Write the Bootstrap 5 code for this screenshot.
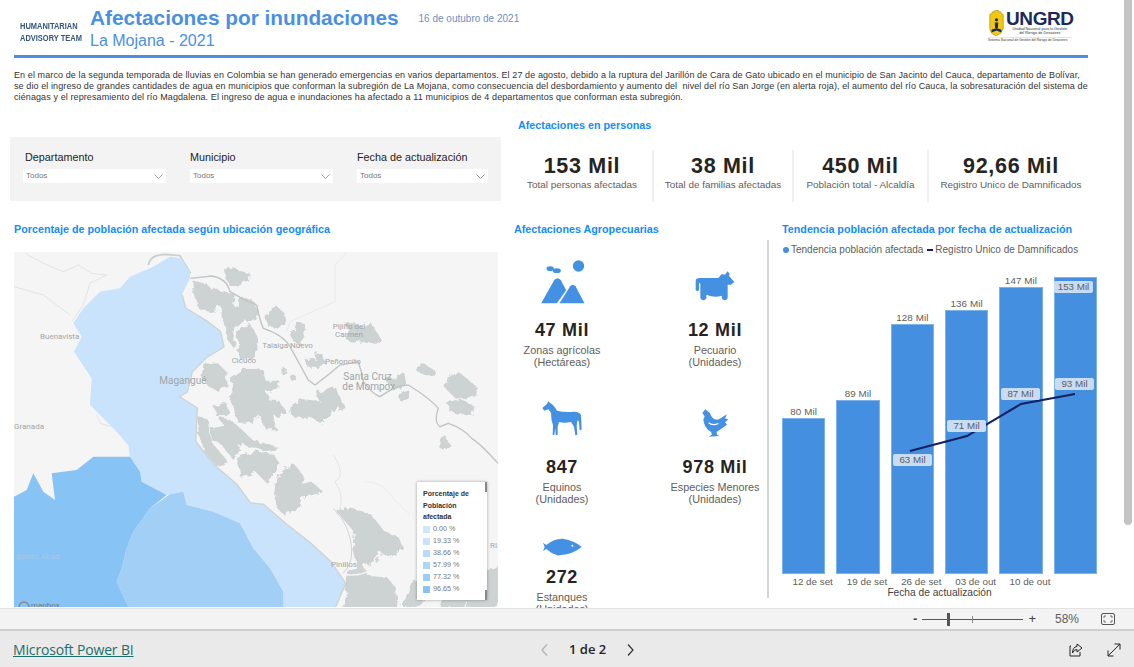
<!DOCTYPE html>
<html lang="es">
<head>
    <meta charset="utf-8">
    <title>Afectaciones por inundaciones</title>
    <link href="https://cdn.jsdelivr.net/npm/bootstrap@5.3.0/dist/css/bootstrap.min.css" rel="stylesheet">
    <style>
        body { font-family: "Liberation Sans", Arial, sans-serif; background: #fff; overflow: hidden; }
        .app { height: 667px; }
        .report { height: 608px; position: relative; overflow: hidden; padding-left: 10px; }
        .scroll-thumb { position: absolute; right: 2px; top: 0; width: 8px; height: 525px; background: #c4c4c4; border-radius: 0 0 4px 4px; }
        .head-row { height: 55px; padding-left: 10px; padding-right: 62px; }
        .team { width: 70px; padding-top: 20px; font-size: 8.5px; font-weight: 700; line-height: 12px; color: #34557c; transform: scaleX(.88); transform-origin: left; white-space: nowrap; }
        .main-title { font-size: 20.8px; font-weight: 700; color: #4a90e2; line-height: 24px; padding-top: 6px; }
        .sub-title { font-size: 16px; color: #4a90e2; line-height: 19px; margin-top: 1px; }
        .report-date { font-size: 10px; color: #6f8fc0; padding-top: 11px; margin-left: 20px; }
        .logo { width: 84px; padding-top: 10px; }
        .logo-name { font-size: 19px; font-weight: 700; line-height: 17px; color: #1b2a5c; letter-spacing: -.4px; }
        .logo-sub { font-size: 3.8px; line-height: 4.2px; color: #333; text-align: center; }
        .logo-foot { font-size: 3.3px; line-height: 4px; color: #333; border-top: 1px solid #f6e9a0; margin-top: 1px; white-space: nowrap; }
        .shield { margin-right: 1px; }
        .rule { height: 3px; background: #4a90e2; margin: 0 46px 0 4px; }
        .intro { font-size: 9px; line-height: 11px; color: #333; margin: 12px 0 0 4px; white-space: nowrap; letter-spacing: .1px; }
        .top-grid { display: grid; grid-template-columns: 491px 1fr; margin-top: 15px; }
        .filters-wrap { padding-top: 7px; }
        .blue-head { font-size: 10.75px; font-weight: 700; color: #118dff; line-height: 14px; white-space: nowrap; }
        .filters { margin-top: 12px; background: #f3f3f3; height: 64px; display: grid; grid-template-columns: 143px 143px 1fr; column-gap: 24px; padding: 13px 13px 0 13px; }
        .slicer-name { font-size: 10.8px; line-height: 15px; color: #252423; white-space: nowrap; }
        .filters > div:first-child .slicer-name { margin-left: 2px; }
        .slicer-box { height: 14px; margin-top: 4px; background: #fff; font-size: 8px; line-height: 14px; color: #777; padding: 0 3px; }
        .people { padding-left: 17px; padding-right: 31px; }
        .kpi-row { display: grid; grid-template-columns: 134px 140px 135px 166px; margin-top: 18px; }
        .kpi { text-align: center; height: 52px; border-left: 2px solid #efefef; padding-top: 5px; }
        .kpi:first-child { border-left: 0; padding-right: 6px; }
        .kpi-num { font-size: 21.5px; font-weight: 700; line-height: 22px; color: #252423; letter-spacing: .7px; }
        .kpi-text { font-size: 9.9px; line-height: 14px; color: #605e5c; margin-top: 1px; white-space: nowrap; }
        .low-grid { display: grid; grid-template-columns: 504px 255px 1fr; margin-top: 20px; }
        .map-col { padding-left: 4px; }
        .map-box { margin-top: 16px; width: 484px; height: 355px; position: relative; background: #f5f5f5; overflow: hidden; }
        .map-box svg { display: block; }
        .map-name { font-family: Roboto, "Liberation Sans", sans-serif; fill: #a2a6a6; font-size: 24px; }
        .map-name.big { font-size: 30px; }
        .legend-box { position: absolute; left: 403px; top: 230px; width: 70px; height: 118px; background: #fff; box-shadow: 0 0 3px rgba(0,0,0,.35); padding: 6px 6px; }
        .legend-head { font-size: 7px; font-weight: 700; line-height: 11.7px; color: #333; }
        .legend-line { font-size: 7.2px; line-height: 12px; color: #777; display: flex; align-items: center; gap: 3px; }
        .legend-swatch { width: 7px; height: 7px; display: inline-block; }
        .legend-thumb { position: absolute; right: 0; width: 2px; height: 10px; background: #888; }
        .agro-body { margin-top: 4px; margin-left: -27px; height: 358px; border-right: 2px solid #d4d4d4; display: grid; grid-template-columns: 153px 1fr; grid-template-rows: 137px 122px auto; padding-top: 12px; }
        .agro-item { text-align: center; width: 150px; }
        .ico-box { height: 67px; display: flex; align-items: center; justify-content: center; }
        .ico-box.short { height: 55px; }
        .agro-num { font-size: 18px; font-weight: 700; line-height: 22px; color: #252423; letter-spacing: .7px; }
        .agro-text { font-size: 10.8px; line-height: 12px; color: #605e5c; margin-top: 3px; }
        .chart-col { padding-left: 13px; }
        .legend-row { font-size: 10px; line-height: 14px; color: #605e5c; margin-top: 7px; white-space: nowrap; }
        .dot-mark { width: 6px; height: 6px; border-radius: 50%; background: #448fdf; margin: 0 2px 0 1px; }
        .dash-mark { width: 6px; height: 2px; background: #14205f; margin: 0 2px 0 4px; }
        .plot { position: relative; width: 315px; height: 306px; margin-top: 11px; }
        .bars { height: 100%; gap: 11px; }
        .bar-slot { flex: 1; display: flex; flex-direction: column; justify-content: flex-end; text-align: center; }
        .bar-value { font-size: 9.8px; line-height: 13px; color: #605e5c; letter-spacing: .1px; }
        .bar-fill { background: #448fdf; border: 1px solid #7db2ea; }
        .trend { position: absolute; left: 0; top: 0; }
        .chip { position: absolute; width: 39px; height: 12px; background: #c8dcf4; border-radius: 2px; font-size: 9.8px; line-height: 12px; text-align: center; color: #605e5c; }
        .axis-row { gap: 11px; width: 315px; margin-left: 9px; font-size: 9.8px; line-height: 12px; color: #605e5c; margin-top: 2px; }
        .axis-cell { flex: 1; text-align: center; white-space: nowrap; }
        .axis-title { width: 315px; text-align: center; font-size: 10.2px; line-height: 11px; color: #444; margin-top: -1px; }
        .zoom-bar { height: 23px; background: #f3f3f3; border-top: 1px solid #e3e3e3; border-bottom: 2px solid #cfcfcf; padding-right: 19px; color: #555; }
        .zoom-track { width: 101px; height: 1px; background: #555; position: relative; margin: 0 5px; }
        .zoom-knob { position: absolute; left: 25px; top: -6px; width: 3px; height: 13px; background: #555; }
        .zoom-tick { position: absolute; left: 50px; top: -3px; width: 1px; height: 7px; background: #888; }
        .zoom-sign { font-size: 13px; line-height: 14px; color: #444; }
        .zoom-pct { font-size: 12px; margin: 0 22px 0 19px; color: #605e5c; }
        .foot-bar { height: 36px; background: #eaeaea; padding: 2px 13px 0; }
        .brand-wrap { width: 528px; }
        .brand { font-family: "Open Sans", "Liberation Sans", sans-serif; font-size: 14px; color: #1d6f69; letter-spacing: -.15px; }
        .pager { font-size: 13px; font-weight: 600; color: #252423; font-family: "Open Sans", "Liberation Sans", sans-serif; gap: 21px; }
    </style>
</head>
<body>
<div class="app d-flex flex-column">
    <div class="report">
        <div class="head-row d-flex">
            <div class="team">HUMANITARIAN<br>ADVISORY TEAM</div>
            <div>
                <div class="d-flex">
                    <div class="main-title">Afectaciones por inundaciones</div>
                    <div class="report-date">16 de outubro de 2021</div>
                </div>
                <div class="sub-title">La Mojana - 2021</div>
            </div>
            <div class="logo ms-auto">
                <div class="d-flex">
                    <svg class="shield flex-shrink-0" width="17" height="26" viewBox="0 0 17 29">
                        <path d="M1 12 L1 5 L3 4 L4 2 L6 2 L7 0 L10 0 L11 2 L13 2 L14 4 L16 5 L16 21 L13 26 L8 29 L3 26 L1 21 Z" fill="#f2c811" stroke="#8a7a10" stroke-width=".6"/>
                        <circle cx="8.5" cy="11" r="1.8" fill="#1b2a5c"/>
                        <path d="M6.5 14 H10.5 L10 20 H7 Z M3 22 L8.5 20 L14 22 L14 25 L8.5 23 L3 25 Z" fill="#1b2a5c"/>
                    </svg>
                    <div class="flex-grow-1">
                        <div class="logo-name">UNGRD</div>
                        <div class="logo-sub">Unidad Nacional para la Gestión<br>del Riesgo de Desastres</div>
                    </div>
                </div>
                <div class="logo-foot">Sistema Nacional de Gestión del Riesgo de Desastres</div>
            </div>
        </div>
        <div class="rule"></div>
        <div class="intro">En el marco de la segunda temporada de lluvias en Colombia se han generado emergencias en varios departamentos. El 27 de agosto, debido a la ruptura del Jarillón de Cara de Gato ubicado en el municipio de San Jacinto del Cauca, departamento de Bolívar,<br>se dio el ingreso de grandes cantidades de agua en municipios que conforman la subregión de La Mojana, como consecuencia del desbordamiento y aumento del&nbsp; nivel del río San Jorge (en alerta roja), el aumento del río Cauca, la sobresaturación del sistema de<br>ciénagas y el represamiento del río Magdalena. El ingreso de agua e inundaciones ha afectado a 11 municipios de 4 departamentos que conforman esta subregión.</div>

        <div class="top-grid">
            <div class="filters-wrap">
                <div class="filters">
                    <div>
                        <div class="slicer-name">Departamento</div>
                        <div class="slicer-box d-flex justify-content-between align-items-center">Todos
                            <svg width="9" height="5" viewBox="0 0 9 5"><path d="M.5 .5 L4.5 4.5 L8.5 .5" fill="none" stroke="#888" stroke-width=".8"/></svg></div>
                    </div>
                    <div>
                        <div class="slicer-name">Municipio</div>
                        <div class="slicer-box d-flex justify-content-between align-items-center">Todos
                            <svg width="9" height="5" viewBox="0 0 9 5"><path d="M.5 .5 L4.5 4.5 L8.5 .5" fill="none" stroke="#888" stroke-width=".8"/></svg></div>
                    </div>
                    <div>
                        <div class="slicer-name">Fecha de actualización</div>
                        <div class="slicer-box d-flex justify-content-between align-items-center">Todos
                            <svg width="9" height="5" viewBox="0 0 9 5"><path d="M.5 .5 L4.5 4.5 L8.5 .5" fill="none" stroke="#888" stroke-width=".8"/></svg></div>
                    </div>
                </div>
            </div>
            <div class="people">
                <div class="blue-head">Afectaciones en personas</div>
                <div class="kpi-row">
                    <div class="kpi"><div class="kpi-num">153 Mil</div><div class="kpi-text">Total personas afectadas</div></div>
                    <div class="kpi"><div class="kpi-num">38 Mil</div><div class="kpi-text">Total de familias afectadas</div></div>
                    <div class="kpi"><div class="kpi-num">450 Mil</div><div class="kpi-text">Población total - Alcaldía</div></div>
                    <div class="kpi"><div class="kpi-num">92,66 Mil</div><div class="kpi-text">Registro Unico de Damnificados</div></div>
                </div>
            </div>
        </div>

        <div class="low-grid">
            <div class="map-col">
                <div class="blue-head">Porcentaje de población afectada según ubicación geográfica</div>
                <div class="map-box">
                    <svg width="484" height="355" viewBox="42 111 1452 1065">
                        <defs>
                            <filter id="rough" x="-5%" y="-5%" width="110%" height="110%">
                                <feTurbulence type="fractalNoise" baseFrequency=".05" numOctaves="3" seed="4" result="noise"/>
                                <feDisplacementMap in="SourceGraphic" in2="noise" scale="22"/>
                                <feGaussianBlur stdDeviation="1.4"/>
                            </filter>
                            <filter id="soften"><feGaussianBlur stdDeviation="1.2"/></filter>
                        </defs>
                        <g fill="none" stroke="#d8dada" stroke-width="2" filter="url(#soften)">
                            <path d="M75 115 L130 145 L190 170 L235 150 L275 175 L320 180 L270 205 L250 270 L215 320"/>
                            <path d="M42 215 L130 240 L210 300"/>
                            <path d="M290 600 L300 625 L335 635"/>
                            <path d="M1040 112 L1005 150 L1005 260 L870 320 L860 350" stroke="#e2e3e3"/>
                            <path d="M1000 720 Q1040 780 1005 800 Q1040 850 1010 900" stroke="#dcdddd"/>
                            <path d="M1095 800 Q1150 800 1180 850 L1230 900" stroke="#e6e7e7"/>
                        </g>
                        <g filter="url(#rough)" fill="#cdd2d2" stroke="#cdd2d2" stroke-width="6" stroke-linejoin="round">
                            <polygon points="675,165 700,160 720,170 750,180 740,195 715,205 690,210 680,190"/>
                            <polygon points="805,285 830,278 850,295 855,320 835,335 810,335 800,310"/>
                            <polygon points="875,355 890,345 895,325 912,330 910,365 895,385 880,375"/>
                            <polygon points="1040,325 1060,325 1085,340 1110,325 1125,350 1145,380 1110,385 1085,375 1060,380 1040,370 1050,345"/>
                            <polygon points="920,435 945,430 950,415 970,425 975,445 960,455 925,455"/>
                            <polygon points="1250,465 1270,450 1305,470 1300,485 1270,475"/>
                            <polygon points="1345,490 1375,475 1395,490 1430,520 1425,540 1400,550 1365,545 1340,520"/>
                            <polygon points="1345,565 1380,555 1420,575 1415,600 1385,595 1350,585"/>
                            <polygon points="1325,670 1335,665 1345,690 1335,705 1318,695"/>
                            <polygon points="1190,490 1210,475 1215,500 1195,520 1170,510 1160,495"/>
                            <polygon points="1195,540 1225,530 1222,550 1200,555"/>
                            <polygon points="955,535 1005,520 1012,540 1030,575 1000,585 960,555"/>
                            <polygon points="880,570 905,555 950,560 985,570 990,600 960,620 930,605 885,605 875,595"/>
                            <polygon points="700,490 735,465 785,465 795,500 835,500 835,520 795,530 810,570 825,640 800,640 775,590 755,620 715,620 710,590 695,560"/>
                            <polygon points="810,560 835,560 855,590 830,600 810,590"/>
                            <polygon points="610,450 650,445 675,470 680,510 655,525 625,510 605,480"/>
                            <polygon points="645,575 680,570 680,600 650,600"/>
                            <polygon points="580,200 620,210 640,235 660,260 640,290 600,280 585,240"/>
                            <polygon points="665,275 720,280 725,320 690,350 670,320"/>
                            <polygon points="715,350 750,330 775,385 760,430 720,430"/>
                            <polygon points="680,330 700,360 700,395 685,370"/>
                            <polygon points="720,250 760,262 775,300 745,320 720,295"/>
                            <polygon points="640,225 700,240 700,275 660,270"/>
                            <polygon points="595,610 620,615 630,680 680,740 650,750 615,710 600,660"/>
                            <polygon points="635,640 680,630 725,680 700,730 670,690 635,670"/>
                            <polygon points="660,610 700,625 760,680 830,700 800,705 740,690 690,650"/>
                            <polygon points="715,730 760,710 820,720 835,745 800,800 770,770 725,785"/>
                            <polygon points="850,770 880,750 905,780 900,810 935,805 965,830 925,840 900,840 870,830 860,850 825,840 830,800"/>
                            <polygon points="830,850 880,835 905,845 890,880 850,895 832,875"/>
                            <polygon points="1015,890 1050,880 1110,900 1150,950 1195,970 1205,1000 1170,1025 1140,1005 1130,1030 1075,1060 1060,1000 1065,950"/>
                            <polygon points="1045,1070 1090,1060 1100,1085 1040,1095"/>
                            <polygon points="1030,1100 1085,1085 1160,1090 1185,1120 1190,1176 1030,1176 1045,1135"/>
                            <polygon points="1210,1176 1240,1095 1300,1130 1250,1176"/>
                            <polygon points="1320,1176 1340,1140 1400,1150 1390,1176"/>
                            <polygon points="1400,1176 1420,1090 1494,1060 1494,1176"/>
                            <polygon points="850,460 858,465 850,480"/>
                            <polygon points="875,480 885,485 878,495"/>
                        </g>
                        <g filter="url(#soften)" fill="none">
                            <path d="M445 150 Q450 118 500 118 L540 122 L572 175" stroke="#c8cdcd" stroke-width="5"/>
                            <path d="M572 190 L635 183 Q680 190 690 230 Q730 255 770 270 Q780 320 790 340 Q850 360 870 395 Q900 450 925 495 L945 510 Q985 480 1020 450 L1075 440 Q1085 470 1090 500 Q1120 540 1140 545 Q1190 510 1225 510 Q1290 550 1315 580 Q1300 620 1320 635 L1345 625 Q1390 640 1415 670 Q1440 685 1494 745" stroke="#bfc4c4" stroke-width="4"/>
                            <path d="M1000 880 Q1050 930 1055 1000 Q1060 1060 1010 1090" stroke="#c8cdcd" stroke-width="2.5"/>
                            <path d="M1010 1075 Q1080 1090 1120 1060 Q1160 1090 1200 1080" stroke="#f5f5f5" stroke-width="5"/>
                            <path d="M545 240 L555 280 L620 320 L660 350 L670 395 L620 425 L575 470 L560 530 L535 545 L590 580 L585 680 L640 750 L710 810 L750 865 L790 870 L860 930 L930 985 L990 1040 L1035 1105 L1005 1176" stroke="#cfd3d3" stroke-width="8"/>
                        </g>
                        <g filter="url(#soften)">
                            <polygon fill="#c8e3fb" points="460,155 510,125 545,130 570,170 570,190 545,240 555,280 620,320 660,350 670,395 620,425 575,470 560,530 535,545 590,580 585,680 640,750 710,810 750,865 790,870 860,930 930,985 990,1040 1035,1105 1005,1176 850,1176 850,1130 810,1060 760,1000 720,925 640,890 560,870 550,830 500,840 425,800 420,770 390,725 385,690 340,640 310,610 270,570 275,490 222,410 245,365 220,325 250,280 300,230 360,220 390,185"/>
                            <polygon fill="#a1cff6" points="510,838 450,880 400,950 380,1000 365,1060 350,1100 385,1176 850,1176 850,1130 810,1060 760,1000 720,925 640,890 560,870 550,830"/>
                            <polygon fill="#87c3f5" points="42,845 80,825 100,775 130,830 165,855 155,775 230,765 280,725 390,725 420,770 425,800 500,840 450,880 400,950 380,1000 365,1060 350,1100 385,1176 42,1176"/>
                        </g>
                        <text class="map-name" x="120" y="373">Buenavista</text>
                        <text class="map-name big" x="478" y="506">Magangué</text>
                        <text class="map-name" x="787" y="400">Talaiga Nuevo</text>
                        <text class="map-name" x="695" y="443">Cicuco</text>
                        <text class="map-name" x="998" y="341">Pijiño del</text>
                        <text class="map-name" x="1005" y="366">Carmen</text>
                        <text class="map-name" x="975" y="448">Peñoncito</text>
                        <text class="map-name big" x="1030" y="495">Santa Cruz</text>
                        <text class="map-name big" x="1027" y="525">de Mompox</text>
                        <text class="map-name" x="42" y="641">Granada</text>
                        <text class="map-name" x="48" y="1032" style="fill:#a9c8e4">Benito Abad</text>
                        <text class="map-name" x="993" y="1055">Pinillos</text>
                        <text class="map-name" x="1470" y="998">RIA</text>
                        <circle cx="72" cy="1176" r="15" fill="none" stroke="#888" stroke-width="4"/>
                        <text class="map-name" x="93" y="1180" style="fill:#777">mapbox</text>
                    </svg>
                    <div class="legend-box">
                        <div class="legend-thumb top-0"></div>
                        <div class="legend-thumb bottom-0"></div>
                        <div class="legend-head">Porcentaje de<br>Población<br>afectada</div>
                        <div class="legend-line"><span class="legend-swatch" style="background:#cfe6fb"></span> 0.00 %</div>
                        <div class="legend-line"><span class="legend-swatch" style="background:#c8e3fb"></span> 19.33 %</div>
                        <div class="legend-line"><span class="legend-swatch" style="background:#bbdcf9"></span> 38.66 %</div>
                        <div class="legend-line"><span class="legend-swatch" style="background:#aed6f8"></span> 57.99 %</div>
                        <div class="legend-line"><span class="legend-swatch" style="background:#9acdf7"></span> 77.32 %</div>
                        <div class="legend-line"><span class="legend-swatch" style="background:#87c3f5"></span> 96.65 %</div>
                    </div>
                </div>
            </div>

            <div class="agro-col">
                <div class="blue-head">Afectaciones Agropecuarias</div>
                <div class="agro-body">
                    <div class="agro-item">
                        <div class="ico-box">
                            <svg class="mb-2" width="47" height="46" viewBox="15 10 140 138" fill="#4490e2">
                                <circle cx="133" cy="31" r="17"/>
                                <ellipse cx="48" cy="39" rx="11" ry="7"/>
                                <ellipse cx="68" cy="45" rx="12" ry="7"/>
                                <path d="M21 143 L60 74 Q70 62 80 74 L96 104 L68 143 Z"/>
                                <path d="M76 143 L108 92 Q116 82 124 92 L151 143 Z"/>
                            </svg>
                        </div>
                        <div class="agro-num">47 Mil</div>
                        <div class="agro-text">Zonas agrícolas<br>(Hectáreas)</div>
                    </div>
                    <div class="agro-item">
                        <div class="ico-box">
                            <svg width="40" height="30" viewBox="482 41 120 90" fill="#4490e2">
                                <path d="M484 98 V72 Q484 62 496 62 H552 L562 50 L572 52 L580 42 L586 50 L584 56 L600 74 L590 82 H580 V122 Q578 130 568 128 Q562 126 562 115 Q540 122 516 112 V122 Q514 130 504 128 Q498 126 498 120 V80 L494 76 V98 Q490 104 484 98 Z"/>
                            </svg>
                        </div>
                        <div class="agro-num">12 Mil</div>
                        <div class="agro-text">Pecuario<br>(Unidades)</div>
                    </div>
                    <div class="agro-item">
                        <div class="ico-box">
                            <svg class="mb-2" width="40" height="35" viewBox="23 27 120 105" fill="#4490e2">
                                <path d="M24 48 L38 36 L42 28 L47 33 Q58 38 68 56 Q90 62 118 59 Q136 58 140 70 L142 112 L136 116 L134 90 L130 84 L127 100 L129 128 L123 130 L119 104 L110 90 Q90 94 74 90 L70 104 L70 128 L64 130 L63 108 L60 128 L55 130 L56 100 Q50 84 50 62 L42 52 L30 56 Z"/>
                            </svg>
                        </div>
                        <div class="agro-num">847</div>
                        <div class="agro-text">Equinos<br>(Unidades)</div>
                    </div>
                    <div class="agro-item">
                        <div class="ico-box">
                            <svg width="27" height="28" viewBox="502 56 82 85" fill="#4490e2">
                                <path d="M503 68 L512 57 L526 68 Q530 82 542 88 L552 88 L578 72 L572 84 L582 88 L572 96 L578 104 L566 112 L552 122 L546 126 L548 134 L554 138 L522 140 L532 134 L530 126 Q508 114 506 88 L510 78 Z"/>
                                <path d="M522 98 Q534 108 552 100" fill="none" stroke="#fff" stroke-width="4"/>
                            </svg>
                        </div>
                        <div class="agro-num">978 Mil</div>
                        <div class="agro-text">Especies Menores<br>(Unidades)</div>
                    </div>
                    <div class="agro-item">
                        <div class="ico-box short">
                            <svg class="mt-3" width="39" height="18" viewBox="115 961 118 54" fill="#4490e2">
                                <path d="M115 975 L125 982 Q150 962 175 963 Q210 968 232 988 Q205 1010 170 1012 L160 1014 Q140 1008 125 994 L115 1000 L120 988 Z"/>
                                <circle cx="204" cy="984" r="3" fill="#fff"/>
                            </svg>
                        </div>
                        <div class="agro-num">272</div>
                        <div class="agro-text">Estanques<br>(Unidades)</div>
                    </div>
                </div>
            </div>

            <div class="chart-col">
                <div class="blue-head">Tendencia población afectada por fecha de actualización</div>
                <div class="legend-row d-flex align-items-center">
                    <span class="dot-mark"></span>Tendencia población afectada
                    <span class="dash-mark"></span>Registro Unico de Damnificados
                </div>
                <div class="plot">
                    <div class="bars d-flex">
                        <div class="bar-slot"><div class="bar-value">80 Mil</div><div class="bar-fill" style="height:156px"></div></div>
                        <div class="bar-slot"><div class="bar-value">89 Mil</div><div class="bar-fill" style="height:174px"></div></div>
                        <div class="bar-slot"><div class="bar-value">128 Mil</div><div class="bar-fill" style="height:250px"></div></div>
                        <div class="bar-slot"><div class="bar-value">136 Mil</div><div class="bar-fill" style="height:264px"></div></div>
                        <div class="bar-slot"><div class="bar-value">147 Mil</div><div class="bar-fill" style="height:287px"></div></div>
                        <div class="bar-slot"><div class="bar-fill" style="height:297px"></div></div>
                    </div>
                    <svg class="trend" width="315" height="306" viewBox="0 0 315 306">
                        <polyline points="128,183 185,168 239,136 293,126" fill="none" stroke="#14205f" stroke-width="2"/>
                    </svg>
                    <div class="chip" style="left:272px;top:13px">153 Mil</div>
                    <div class="chip" style="left:273px;top:110px">93 Mil</div>
                    <div class="chip" style="left:219px;top:120px">87 Mil</div>
                    <div class="chip" style="left:165px;top:152px">71 Mil</div>
                    <div class="chip" style="left:111px;top:186px">63 Mil</div>
                </div>
                <div class="axis-row d-flex">
                    <div class="axis-cell">12 de set</div>
                    <div class="axis-cell">19 de set</div>
                    <div class="axis-cell">26 de set</div>
                    <div class="axis-cell">03 de out</div>
                    <div class="axis-cell">10 de out</div>
                    <div class="axis-cell"></div>
                </div>
                <div class="axis-title">Fecha de actualización</div>
            </div>
        </div>
        <div class="scroll-thumb"></div>
    </div>

    <div class="zoom-bar d-flex align-items-center justify-content-end">
        <span class="zoom-sign fw-bold">-</span>
        <div class="zoom-track"><div class="zoom-knob"></div><div class="zoom-tick"></div></div>
        <span class="zoom-sign">+</span>
        <span class="zoom-pct">58%</span>
        <svg width="14" height="12" viewBox="0 0 14 12"><rect x=".5" y=".5" width="13" height="11" rx="1.5" fill="none" stroke="#555"/><path d="M3 5 V3 H5 M9 3 H11 V5 M11 7 V9 H9 M5 9 H3 V7" fill="none" stroke="#555" stroke-width=".8"/></svg>
    </div>

    <div class="foot-bar d-flex align-items-center">
        <div class="brand-wrap"><a class="brand" href="#">Microsoft Power BI</a></div>
        <div class="pager d-flex align-items-center">
            <svg width="7" height="12" viewBox="0 0 7 12"><path d="M6 .5 L1 6 L6 11.5" fill="none" stroke="#b0b0b0" stroke-width="1.2"/></svg>
            <span>1 de 2</span>
            <svg width="7" height="12" viewBox="0 0 7 12"><path d="M1 .5 L6 6 L1 11.5" fill="none" stroke="#333" stroke-width="1.2"/></svg>
        </div>
        <div class="ms-auto d-flex align-items-center gap-4">
            <svg width="14" height="14" viewBox="0 0 14 14"><path d="M8 1 L13 5 L8 9 V6.5 Q4.5 6.5 3.5 10 Q3.5 4 8 3.5 Z" fill="none" stroke="#252423"/><path d="M2 3 H1 V13 H11 V9" fill="none" stroke="#252423"/></svg>
            <svg width="14" height="14" viewBox="0 0 14 14"><path d="M1 13 L13 1 M7.5 1 H13 V6.5 M1 7.5 V13 H6.5" fill="none" stroke="#252423"/></svg>
        </div>
    </div>
</div>
<script src="https://cdn.jsdelivr.net/npm/bootstrap@5.3.0/dist/js/bootstrap.bundle.min.js"></script>
</body>
</html>
